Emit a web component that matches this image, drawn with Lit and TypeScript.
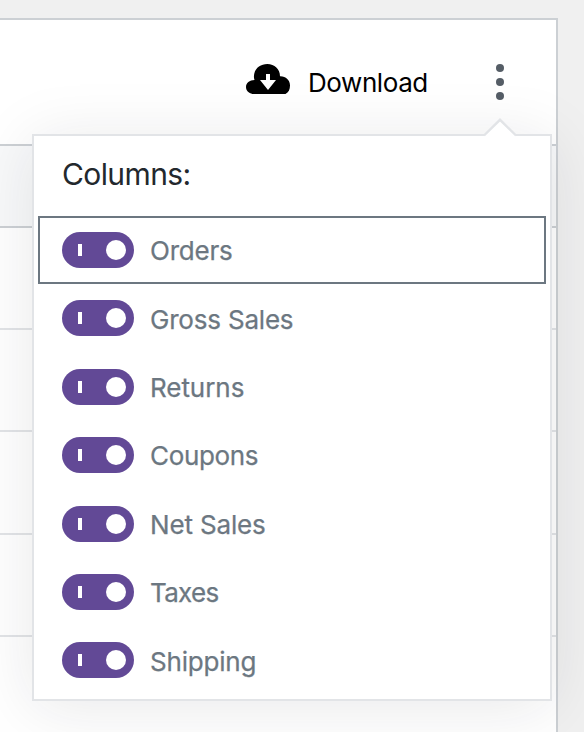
import { LitElement, html, css, svg } from "lit";
import { customElement, property } from "lit/decorators.js";

@customElement("column-toggle")
class ColumnToggle extends LitElement {
  @property() label = "";
  @property({ type: Boolean, reflect: true }) focused = false;
  @property() tracking = "0";

  static styles = css`
    :host {
      display: flex;
      align-items: center;
      box-sizing: border-box;
      height: 68.4px;
      padding: 0 22px 0 22px;
      border: 2px solid transparent;
      color: #6c7781;
      font-size: 26px;
      line-height: 36px;
    }
    :host([focused]) {
      height: 68px;
      margin-bottom: 0.4px;
      border-color: #6c7781;
    }
    .track {
      display: flex;
      align-items: center;
      justify-content: space-between;
      box-sizing: border-box;
      width: 72px;
      height: 36px;
      margin-bottom: 0.5px;
      padding: 0 8px 0 16px;
      border-radius: 18px;
      background: #624996;
    }
    .bar {
      width: 4px;
      height: 12px;
      background: #fff;
    }
    .thumb {
      width: 20px;
      height: 20px;
      border-radius: 50%;
      background: #fff;
    }
    .label {
      margin-left: 16px;
      padding-top: 2px;
      white-space: nowrap;
      -webkit-text-stroke: 0.25px currentColor;
    }
  `;

  render() {
    return html`
      <div class="track"><div class="bar"></div><div class="thumb"></div></div>
      <div class="label" style="letter-spacing:${this.tracking}px">${this.label}</div>
    `;
  }
}

@customElement("app-root")
class AppRoot extends LitElement {
  static styles = css`
    :host {
      display: block;
      position: relative;
      box-sizing: border-box;
      width: 584px;
      height: 732px;
      padding: 18px 26px 0 0;
      overflow: hidden;
      background: #f0f0f0;
      font-family: Inter, "Liberation Sans", sans-serif;
    }
    .card {
      box-sizing: border-box;
      height: 714px;
      border: 2px solid #ccd0d4;
      border-width: 2px 2px 0 0;
      background: #fff;
      overflow: hidden;
    }
    .head {
      display: flex;
      align-items: center;
      justify-content: flex-end;
      box-sizing: border-box;
      height: 126px;
      padding-right: 52px;
      border-bottom: 2px solid #ccd0d4;
    }
    .download {
      display: flex;
      align-items: center;
      margin-right: 68px;
      color: #000;
      font-size: 26px;
      line-height: 36px;
    }
    .download svg {
      margin: -6px 18px 0 0;
    }
    .download span {
      width: 120px;
      padding-top: 2px;
      letter-spacing: -0.42px;
      white-space: nowrap;
    }
    .dots {
      display: block;
    }
    .thead {
      box-sizing: border-box;
      height: 82px;
      border-bottom: 2px solid #ccd0d4;
      background: #f8f9fa;
    }
    .row {
      box-sizing: border-box;
      height: 102.2px;
      border-bottom: 2px solid #e2e4e7;
    }
    .popover {
      position: absolute;
      left: 32px;
      top: 134px;
      box-sizing: border-box;
      width: 520px;
      height: 567px;
      padding: 0 4px;
      border: 2px solid #e2e4e7;
      background: #fff;
      box-shadow: 0 6px 60px rgba(25, 30, 35, 0.1);
    }
    .arrow {
      position: absolute;
      left: 448px;
      top: -18px;
    }
    .title {
      box-sizing: border-box;
      height: 80px;
      padding: 20px 0 0 24px;
      color: #23282d;
      font-size: 30px;
      line-height: 36px;
      letter-spacing: -0.6px;
    }
  `;

  private columns: [string, number][] = [
    ["Orders", -0.2],
    ["Gross Sales", -0.2],
    ["Returns", -0.05],
    ["Coupons", -0.35],
    ["Net Sales", -0.15],
    ["Taxes", -0.7],
    ["Shipping", -0.2],
  ];

  render() {
    return html`
      <div class="card">
        <div class="head">
          <div class="download">
            <svg width="44" height="30" viewBox="0 0 44 30">
              <path d="M6.500 30C2.500 29 0 26.500 0 23C0 19 3.500 16 8.500 16C7.500 13.500 8 11 8.300 9.500C9.800 3.500 15 0 21.300 0C28.500 0 34 5 34 12.200C39.700 12 44 16 44 21.500C44 25.500 42.500 28.500 39.500 30Z" fill="#000" />
              <path d="M20 10h4v6h6l-8 10l-8-10h6z" fill="#fff" />
            </svg>
            <span>Download</span>
          </div>
          <svg class="dots" width="8" height="36" viewBox="0 0 8 36">
            ${[4, 18, 32].map((y) => svg`<circle cx="4" cy=${y} r="4" fill="#555d66" />`)}
          </svg>
        </div>
        <div class="thead"></div>
        ${[0, 1, 2, 3, 4].map(() => html`<div class="row"></div>`)}
      </div>
      <div class="popover">
        <svg class="arrow" width="36" height="20" viewBox="0 0 36 20">
          <path d="M2 20V18L18 2L34 18V20Z" fill="#fff" />
          <path d="M2 17.500L18 1.800L34 17.500" fill="none" stroke="#e2e4e7" stroke-width="2.400" />
        </svg>
        <div class="title">Columns:</div>
        ${this.columns.map(
          ([label, tracking], i) => html`
            <column-toggle .label=${label} .tracking=${String(tracking)} ?focused=${i === 0}></column-toggle>
          `
        )}
      </div>
    `;
  }
}
